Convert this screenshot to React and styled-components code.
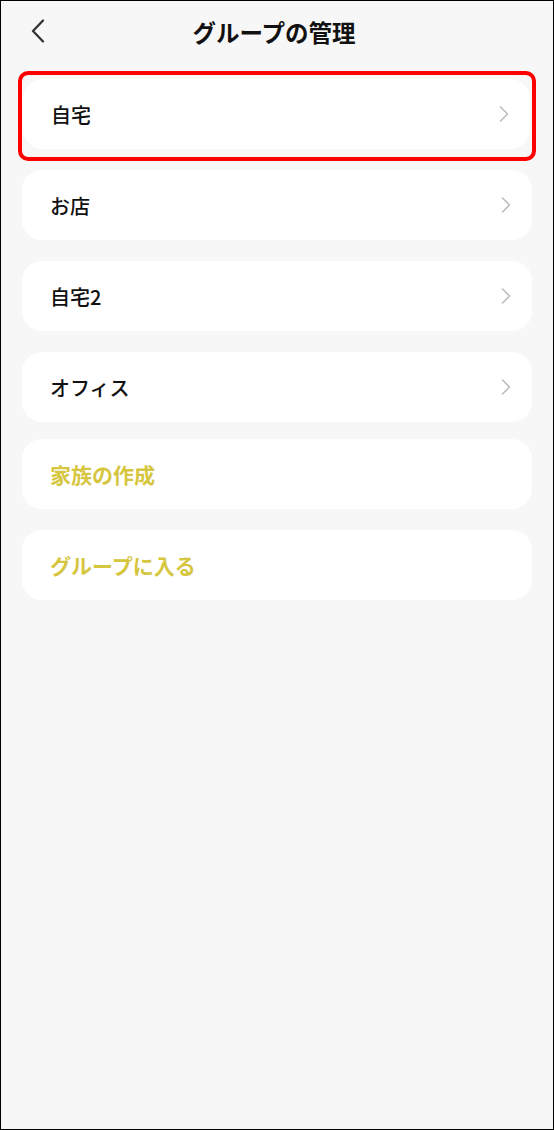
import React from "react";
import styled, { createGlobalStyle } from "styled-components";

const Global = createGlobalStyle`
  html, body { margin: 0; padding: 0; background: #f7f7f7; }
  * { box-sizing: border-box; }
`;

const Screen = styled.div`
  width: 554px;
  height: 1130px;
  border: 1px solid #000;
  background: #f7f7f7;
  font-family: "Noto Sans CJK JP", "Noto Sans", sans-serif;
  display: flex;
  flex-direction: column;
`;

const Header = styled.header`
  position: relative;
  height: 61px;
  display: flex;
  align-items: center;
  justify-content: center;
  flex-shrink: 0;
`;

const BackButton = styled.button`
  position: absolute;
  left: 27px;
  top: 16px;
  width: 20px;
  height: 28px;
  padding: 0;
  border: none;
  background: none;
  display: flex;
  align-items: center;
  justify-content: center;
`;

const Title = styled.h1`
  margin: 0 0 0 -6px;
  font-size: 23.5px;
  font-weight: 700;
  color: #111;
  letter-spacing: 0;
`;

const Highlight = styled.div`
  margin: 9px 17px 0 17px;
  border: 4px solid #ff0000;
  border-radius: 10px;
  padding: 4px 2px 8px 1px;
`;

const List = styled.div`
  display: flex;
  flex-direction: column;
  gap: 21px;
  margin: ${(p) => p.$top}px 21px 0 21px;
`;

const Card = styled.div`
  height: 70px;
  background: #fff;
  border-radius: 20px;
  display: flex;
  align-items: center;
  justify-content: space-between;
  padding: 0 21px 0 28px;
`;

const Label = styled.span`
  font-size: ${(p) => (p.$action ? 21 : 20)}px;
  font-weight: ${(p) => (p.$action ? 600 : 500)};
  color: ${(p) => (p.$action ? "#d6c63f" : "#111")};
`;

const Chevron = () => (
  <svg width="10" height="16" viewBox="0 0 10 16" fill="none">
    <path d="M1.5 1L8.5 8L1.5 15" stroke="#bdbdbd" strokeWidth="1.6" strokeLinecap="round" strokeLinejoin="round" />
  </svg>
);

const BackIcon = () => (
  <svg width="14" height="24" viewBox="0 0 14 24" fill="none">
    <path d="M12 1.5L2 12L12 22.5" stroke="#333" strokeWidth="2.3" strokeLinecap="round" strokeLinejoin="round" />
  </svg>
);

const Row = ({ label }) => (
  <Card>
    <Label>{label}</Label>
    <Chevron />
  </Card>
);

const Action = ({ label }) => (
  <Card>
    <Label $action>{label}</Label>
  </Card>
);

export default function App() {
  return (
    <>
      <Global />
      <Screen>
        <Header>
          <BackButton aria-label="戻る">
            <BackIcon />
          </BackButton>
          <Title>グループの管理</Title>
        </Header>
        <Highlight>
          <Row label="自宅" />
        </Highlight>
        <List $top={9}>
          <Row label="お店" />
          <Row label="自宅2" />
          <Row label="オフィス" />
        </List>
        <List $top={17}>
          <Action label="家族の作成" />
          <Action label="グループに入る" />
        </List>
      </Screen>
    </>
  );
}
